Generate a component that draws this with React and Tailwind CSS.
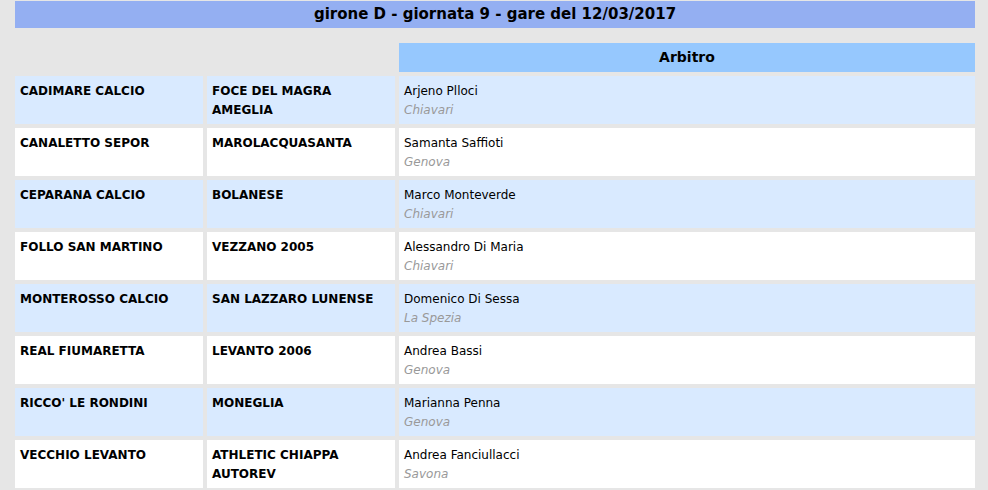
const rows = [
  ["CADIMARE CALCIO", "FOCE DEL MAGRA AMEGLIA", "Arjeno Plloci", "Chiavari"],
  ["CANALETTO SEPOR", "MAROLACQUASANTA", "Samanta Saffioti", "Genova"],
  ["CEPARANA CALCIO", "BOLANESE", "Marco Monteverde", "Chiavari"],
  ["FOLLO SAN MARTINO", "VEZZANO 2005", "Alessandro Di Maria", "Chiavari"],
  ["MONTEROSSO CALCIO", "SAN LAZZARO LUNENSE", "Domenico Di Sessa", "La Spezia"],
  ["REAL FIUMARETTA", "LEVANTO 2006", "Andrea Bassi", "Genova"],
  ["RICCO' LE RONDINI", "MONEGLIA", "Marianna Penna", "Genova"],
  ["VECCHIO LEVANTO", "ATHLETIC CHIAPPA AUTOREV", "Andrea Fanciullacci", "Savona"],
];

export default function App() {
  return (
    <div className="min-h-[490px] bg-[#e6e6e6] pl-[15px] pr-[13px] pt-[1px] font-['DejaVu_Sans',Verdana,sans-serif] text-black">
      <div className="flex h-[27px] items-center justify-center bg-[#94aff2] text-[15px] font-bold">
        girone D - giornata 9 - gare del 12/03/2017
      </div>

      <div className="mt-[15px] grid grid-cols-[188px_188px_1fr] gap-1">
        <div />
        <div />
        <div className="flex h-[29px] items-center justify-center bg-[#96c8fe] text-[14px] font-bold">
          Arbitro
        </div>

        {rows.map(([home, away, ref, city], i) => {
          const bg = i % 2 === 0 ? "bg-[#d9eaff]" : "bg-white";
          return [
            <div key={`h${i}`} className={`${bg} h-[48px] px-[5px] pt-[6px] text-[12px] font-bold leading-[19px]`}>
              {home}
            </div>,
            <div key={`a${i}`} className={`${bg} h-[48px] px-[5px] pt-[6px] text-[12px] font-bold leading-[19px]`}>
              {away}
            </div>,
            <div key={`r${i}`} className={`${bg} h-[48px] px-[5px] pt-[6px] text-[12px] leading-[19px]`}>
              <div>{ref}</div>
              <div className="italic text-[#999]">{city}</div>
            </div>,
          ];
        })}
      </div>
    </div>
  );
}
